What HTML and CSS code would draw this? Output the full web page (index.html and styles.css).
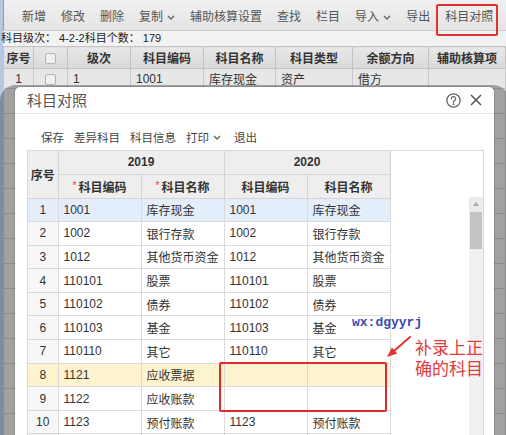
FILE: index.html
```html
<!DOCTYPE html>
<html lang="zh-CN">
<head>
<meta charset="utf-8">
<title>科目对照</title>
<link rel="stylesheet" href="styles.css">
</head>
<body>
<div class="app">
  <div class="toolbar">
    <span class="tb">新增</span>
    <span class="tb">修改</span>
    <span class="tb">删除</span>
    <span class="tb">复制<svg class="chev" viewBox="0 0 8 5"><path d="M1 1l3 3 3-3"/></svg></span>
    <span class="tb">辅助核算设置</span>
    <span class="tb">查找</span>
    <span class="tb">栏目</span>
    <span class="tb">导入<svg class="chev" viewBox="0 0 8 5"><path d="M1 1l3 3 3-3"/></svg></span>
    <span class="tb">导出</span>
    <span class="tb marked">科目对照</span>
  </div>
  <div class="info">科目级次： 4-2-2科目个数： 179</div>
  <table class="main">
    <colgroup>
      <col class="m1"><col class="m2"><col class="m3"><col class="m4"><col class="m5"><col class="m6"><col class="m7"><col class="m8">
    </colgroup>
    <thead>
      <tr><th>序号</th><th><span class="cb"></span></th><th>级次</th><th>科目编码</th><th>科目名称</th><th>科目类型</th><th>余额方向</th><th>辅助核算项</th></tr>
    </thead>
    <tbody>
      <tr class="first"><td class="ctr">1</td><td class="ctr"><span class="cb"></span></td><td>1</td><td>1001</td><td>库存现金</td><td>资产</td><td>借方</td><td></td></tr>
      <tr class="blank"><td></td><td></td><td></td><td></td><td></td><td></td><td></td><td></td></tr>
      <tr class="blank"><td></td><td></td><td></td><td></td><td></td><td></td><td></td><td></td></tr>
      <tr class="blank"><td></td><td></td><td></td><td></td><td></td><td></td><td></td><td></td></tr>
      <tr class="blank"><td></td><td></td><td></td><td></td><td></td><td></td><td></td><td></td></tr>
      <tr class="blank"><td></td><td></td><td></td><td></td><td></td><td></td><td></td><td></td></tr>
      <tr class="blank"><td></td><td></td><td></td><td></td><td></td><td></td><td></td><td></td></tr>
      <tr class="blank"><td></td><td></td><td></td><td></td><td></td><td></td><td></td><td></td></tr>
      <tr class="blank"><td></td><td></td><td></td><td></td><td></td><td></td><td></td><td></td></tr>
      <tr class="blank"><td></td><td></td><td></td><td></td><td></td><td></td><td></td><td></td></tr>
      <tr class="blank"><td></td><td></td><td></td><td></td><td></td><td></td><td></td><td></td></tr>
      <tr class="blank"><td></td><td></td><td></td><td></td><td></td><td></td><td></td><td></td></tr>
      <tr class="blank"><td></td><td></td><td></td><td></td><td></td><td></td><td></td><td></td></tr>
      <tr class="blank"><td></td><td></td><td></td><td></td><td></td><td></td><td></td><td></td></tr>
      <tr class="blank"><td></td><td></td><td></td><td></td><td></td><td></td><td></td><td></td></tr>
    </tbody>
  </table>

  <div class="dialog">
    <div class="dlg-head">
      <span class="dlg-title">科目对照</span>
      <span class="dlg-icons">
        <svg class="ic-help" viewBox="0 0 14 14"><circle cx="7" cy="7" r="6.2"/><path d="M5 5.4a2 2 0 1 1 2.9 1.8c-.6.3-.9.7-.9 1.3v.6"/><circle class="dot" cx="7" cy="10.4" r=".8"/></svg>
        <svg class="ic-close" viewBox="0 0 12 12"><path d="M1 1l10 10M11 1L1 11"/></svg>
      </span>
    </div>
    <div class="dlg-tools">
      <span>保存</span>
      <span>差异科目</span>
      <span>科目信息</span>
      <span class="dd">打印<svg class="chev" viewBox="0 0 8 5"><path d="M1 1l3 3 3-3"/></svg></span>
      <span class="exit">退出</span>
    </div>
    <div class="grid-box">
      <table class="grid">
        <colgroup><col class="g0"><col class="g1"><col class="g1"><col class="g1"><col class="g1"></colgroup>
        <thead>
          <tr class="h1"><th rowspan="2" class="no">序号</th><th colspan="2">2019</th><th colspan="2">2020</th></tr>
          <tr class="h2"><th><i class="req">*</i>科目编码</th><th><i class="req">*</i>科目名称</th><th>科目编码</th><th>科目名称</th></tr>
        </thead>
        <tbody>
          <tr class="sel"><td class="no">1</td><td>1001</td><td>库存现金</td><td>1001</td><td>库存现金</td></tr>
          <tr><td class="no">2</td><td>1002</td><td>银行存款</td><td>1002</td><td>银行存款</td></tr>
          <tr><td class="no">3</td><td>1012</td><td>其他货币资金</td><td>1012</td><td>其他货币资金</td></tr>
          <tr><td class="no">4</td><td>110101</td><td>股票</td><td>110101</td><td>股票</td></tr>
          <tr><td class="no">5</td><td>110102</td><td>债券</td><td>110102</td><td>债券</td></tr>
          <tr><td class="no">6</td><td>110103</td><td>基金</td><td>110103</td><td>基金</td></tr>
          <tr><td class="no">7</td><td>110110</td><td>其它</td><td>110110</td><td>其它</td></tr>
          <tr class="warn"><td class="no">8</td><td>1121</td><td>应收票据</td><td></td><td></td></tr>
          <tr><td class="no">9</td><td>1122</td><td>应收账款</td><td></td><td></td></tr>
          <tr><td class="no">10</td><td>1123</td><td>预付账款</td><td>1123</td><td>预付账款</td></tr>
          <tr><td class="no"></td><td></td><td></td><td></td><td></td></tr>
        </tbody>
      </table>
      <div class="vscroll"><span class="up"></span><span class="thumb"></span></div>
    </div>
  </div>

  <div class="mark-box"></div>
  <svg class="arrow" viewBox="0 0 30 28"><path class="shaft" d="M26 3L10 17"/><path class="head" d="M3 23L13.2 19.5 7.9 13.4z"/></svg>
  <div class="wx">wx:dgyyrj</div>
  <div class="note">补录上正<br>确的科目</div>
</div>
</body>
</html>
```

FILE: styles.css
```css
* { box-sizing: border-box; margin: 0; padding: 0; }
html, body { width: 506px; height: 435px; overflow: hidden; }
body {
  font-family: "Liberation Sans", "Noto Sans CJK SC", sans-serif;
  font-size: 12px;
  color: #333;
  background: #f2f2f2;
}
.app {
  position: relative;
  height: 435px;
  overflow: hidden;
  padding-left: 3px;
  background: linear-gradient(to right, #b7c8e6 0 3px, #f2f2f2 3px);
}

/* top toolbar */
.toolbar {
  display: flex;
  align-items: center;
  gap: 15px;
  height: 31px;
  padding: 4px 0 0 18px;
  background: linear-gradient(#f1f1f1, #e4e4e4);
  border-left: 1px solid #7f9dd0;
  border-bottom: 1px solid #cdcdcd;
}
.tb {
  display: inline-flex;
  align-items: center;
  line-height: 14px;
  color: #555;
}
.chev { width: 8px; height: 5px; margin-left: 4px; fill: none; stroke: #666; stroke-width: 1.4; }
.marked { position: relative; }
.marked::after {
  content: "";
  position: absolute;
  left: -9px; right: -5px; top: -6px; bottom: -12px;
  border: 2px solid #e3322f;
  border-radius: 2px;
}

.info {
  height: 15px;
  line-height: 15px;
  font-size: 11px;
  color: #222;
  margin-left: -2px;
}

/* background table */
.main { border-collapse: collapse; table-layout: fixed; width: 502px; }
.m1 { width: 30px; } .m2 { width: 34px; } .m3 { width: 63px; } .m4 { width: 73px; }
.m5 { width: 72px; } .m6 { width: 77px; } .m7 { width: 76px; } .m8 { width: 77px; }
.main th {
  height: 22px;
  background: linear-gradient(#e8e8e8, #d9d9d9);
  border: 1px solid #c3c3c3;
  font-weight: bold;
  color: #333;
  text-align: center;
}
.main td {
  height: 20px;
  background: #e7e7e7;
  border: 1px solid #c9c9c9;
  padding-left: 5px;
  white-space: nowrap;
}
.main td.ctr { text-align: center; padding-left: 0; }
.main .blank td { height: 25px; }
.cb {
  display: inline-block;
  width: 11px; height: 11px;
  border: 1px solid #b4b4b4;
  border-radius: 2px;
  background: #f0f0f0;
  vertical-align: middle;
}

/* dialog */
.dialog {
  position: absolute;
  left: 15px; top: 87px;
  width: 479px; height: 348px;
  overflow: hidden;
  background: #fff;
  border-radius: 5px 5px 0 0;
  box-shadow: 0 13px 0 15px rgba(0, 0, 0, 0.3), 0 0 0 1px rgba(0, 0, 0, 0.12);
}
.dlg-head {
  display: flex;
  align-items: center;
  justify-content: space-between;
  height: 27px;
  padding: 0 12px;
  border-bottom: 1px solid #e6e6e6;
}
.dlg-title {
  font-family: "Noto Sans CJK SC", sans-serif;
  font-size: 15px;
  line-height: 18px;
  color: #555;
}
.dlg-icons { display: flex; align-items: center; gap: 9px; }
.ic-help { width: 15px; height: 15px; fill: none; stroke: #666; stroke-width: 1.2; stroke-linecap: round; }
.ic-help .dot { fill: #666; stroke: none; }
.ic-close { width: 12px; height: 12px; stroke: #555; stroke-width: 1.5; }

.dlg-tools {
  display: flex;
  align-items: center;
  gap: 10px;
  height: 36px;
  padding: 11px 0 0 26px;
  font-size: 11.5px;
  line-height: 14px;
  color: #444;
}
.dlg-tools .dd { display: inline-flex; align-items: center; }
.dlg-tools .exit { margin-left: 3px; }

.grid-box {
  display: flex;
  justify-content: space-between;
  margin-left: 12px;
  width: 457px;
  height: 300px;
  border: 1px solid #d9d9d9;
}
.grid { border-collapse: collapse; table-layout: fixed; width: 362px; align-self: flex-start; }
.g0 { width: 30px; } .g1 { width: 83px; }
.grid th {
  background: #eeeeee;
  border: 1px solid #d4d4d4;
  font-weight: bold;
  color: #333;
  text-align: center;
}
.grid .h1 th { height: 23px; border-top: none; }
.grid .h2 th { height: 24px; }
.grid th.no { border-left: none; }
.req { font-style: normal; color: #e04040; font-weight: normal; font-size: 10px; vertical-align: 3px; margin-right: 2px; }
.grid td {
  height: 23.6px;
  border: 1px solid #dadada;
  padding-left: 5px;
  white-space: nowrap;
  background: #fff;
}
.grid td.no { text-align: center; padding-left: 0; background: #f7f7f7; border-left: none; }
.grid .sel td { background: #e4eefa; }
.grid .warn td { background: #fdf3cf; }

.vscroll {
  display: flex;
  flex-direction: column;
  width: 14px;
  margin-top: 46px;
  background: #f1f1f1;
}
.vscroll .up {
  position: relative;
  height: 15px;
  background: #ebebeb;
}
.vscroll .up::before {
  content: "";
  position: absolute;
  left: 4px; top: 5px;
  border-left: 3px solid transparent;
  border-right: 3px solid transparent;
  border-bottom: 4px solid #a9a9a9;
}
.vscroll .thumb {
  height: 37px;
  margin: 0 1px;
  background: #c3c3c3;
}

/* annotations */
.mark-box {
  position: absolute;
  left: 219px; top: 362px;
  width: 168px; height: 50px;
  border: 2px solid #e02a2a;
  border-radius: 2px;
}
.arrow {
  position: absolute;
  left: 384px; top: 334px;
  width: 30px; height: 28px;
}
.arrow .shaft { stroke: #e3322f; stroke-width: 2; stroke-linecap: round; fill: none; }
.arrow .head { fill: #e3322f; }
.wx {
  position: absolute;
  left: 352px; top: 315px;
  font-family: "Liberation Mono", monospace;
  font-weight: bold;
  font-size: 13px;
  line-height: 16px;
  color: #3c4ab0;
}
.note {
  position: absolute;
  left: 415px; top: 336px;
  font-family: "Noto Sans CJK SC", sans-serif;
  font-size: 17px;
  line-height: 21px;
  color: #e33b3b;
}
```
